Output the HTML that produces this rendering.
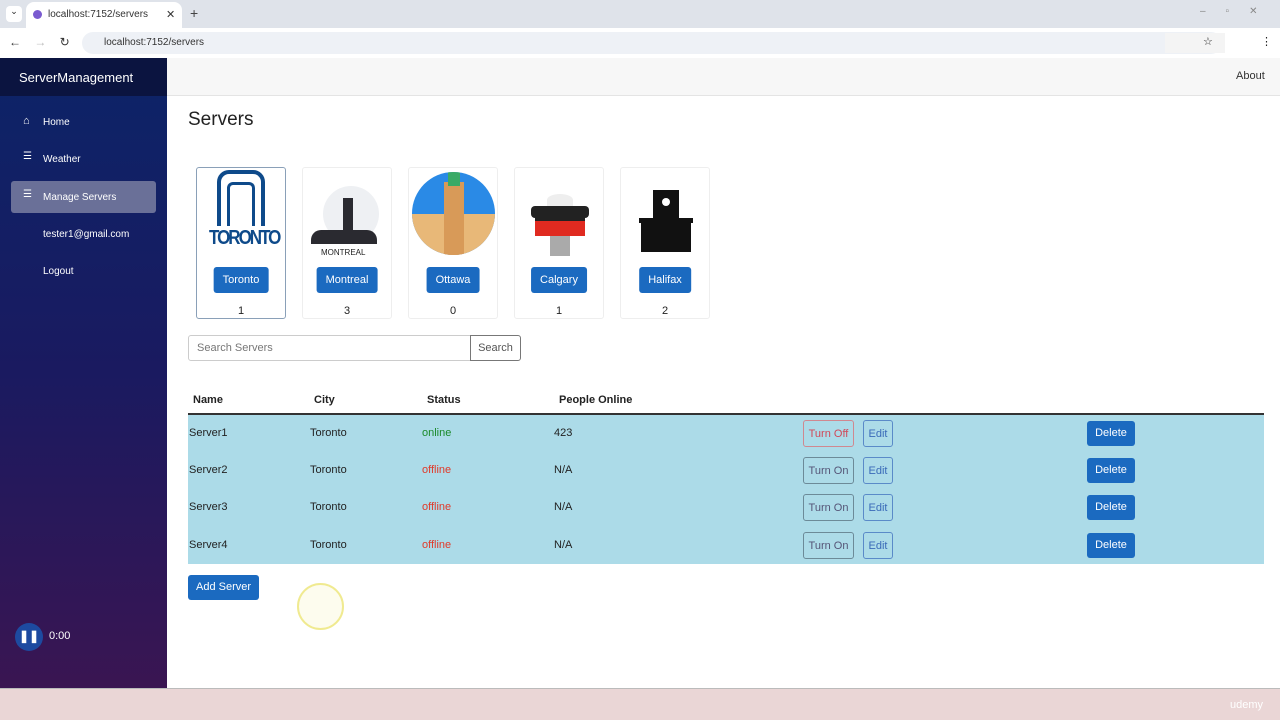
<!DOCTYPE html>
<html><head><meta charset="utf-8"><style>
*{box-sizing:border-box;margin:0;padding:0}
body{width:1280px;height:720px;overflow:hidden;font-family:"Liberation Sans",sans-serif;background:#fff;position:relative;font-size:12px;color:#222}
.a{position:absolute}
.tabbar{left:0;top:0;width:1280px;height:28px;background:#dfe3ea}
.tab{left:26px;top:2px;width:156px;height:26px;background:#fff;border-radius:8px 8px 0 0;font-size:10px;padding:7px 0 0 22px;color:#333}
.addr{left:0;top:28px;width:1280px;height:30px;background:#fff}
.url{left:82px;top:32px;width:1140px;height:22px;background:#eef1f6;border-radius:11px;font-size:10px;padding:5px 0 0 22px;color:#333}
.side{left:0;top:58px;width:167px;height:630px;background:linear-gradient(#0c2468 0%,#1a1a60 50%,#3a1552 100%)}
.brand{left:0;top:58px;width:167px;height:38px;background:#0b1440;color:#fff;font-size:13px;padding:12px 0 0 19px}
.nav{left:11px;width:145px;height:32px;color:#fff;font-size:10px;padding:11px 0 0 32px;border-radius:3px}
.top{left:167px;top:58px;width:1113px;height:38px;background:#f7f7f7;border-bottom:1px solid #e4e4e4}
.card{top:167px;width:90px;height:152px;border:1px solid #eee;border-radius:3px;text-align:center;font-size:11px}
.card .b{position:absolute;top:99px;left:50%;transform:translateX(-50%);background:#1b6ac0;color:#fff;padding:7px 9px;border-radius:3px;font-size:11px}
.card .n{position:absolute;top:137px;width:100%;left:0}
.btn{background:#1b6ac0;color:#fff;border-radius:3px;font-size:11px;text-align:center}
.row{left:188px;width:1076px;height:37px;background:#acdbe8}
.ob{border:1px solid #6c8a98;border-radius:3px;font-size:11px;text-align:center;color:#557;height:27px;padding-top:7px}
</style></head><body>
<div class="a tabbar"></div>
<div class="a" style="left:6px;top:6px;width:16px;height:16px;background:#fff;border-radius:4px;font-size:9px;text-align:center">⌄</div>
<div class="a tab"><span class="a" style="left:7px;top:8px;width:9px;height:9px;border-radius:50%;background:#7a5bd0"></span>localhost:7152/servers<span class="a" style="left:140px;top:6px;font-size:11px">✕</span></div>
<div class="a" style="left:190px;top:5px;font-size:14px;color:#444">+</div>
<div class="a" style="left:1200px;top:6px;font-size:10px;color:#888;letter-spacing:20px">–▫✕</div>
<div class="a addr"></div>
<div class="a" style="left:9px;top:35px;font-size:12px;color:#333">←&nbsp;&nbsp;&nbsp;&nbsp;<span style="color:#bbb">→</span>&nbsp;&nbsp;&nbsp;&nbsp;↻</div>
<div class="a url">localhost:7152/servers</div>
<div class="a" style="left:1165px;top:33px;width:60px;height:20px;background:#f4f4f4"></div>
<div class="a" style="left:1203px;top:35px;font-size:11px">☆</div>
<div class="a" style="left:1261px;top:35px;font-size:11px">⋮</div>

<div class="a side"></div>
<div class="a brand">ServerManagement</div>
<div class="a nav" style="top:106px"><span class="a" style="left:12px;top:9px;font-size:11px">⌂</span>Home</div>
<div class="a nav" style="top:143px"><span class="a" style="left:12px;top:8px">☰</span>Weather</div>
<div class="a nav" style="top:181px;background:#6a7098"><span class="a" style="left:12px;top:8px">☰</span>Manage Servers</div>
<div class="a nav" style="top:218px">tester1@gmail.com</div>
<div class="a nav" style="top:255px">Logout</div>
<div class="a" style="left:15px;top:623px;width:28px;height:28px;border-radius:50%;background:#1d4aa0;color:#fff;font-size:12px;text-align:center;padding-top:6px;font-weight:bold">❚❚</div>
<div class="a" style="left:49px;top:630px;color:#fff;font-size:11px">0:00</div>

<div class="a top"></div>
<div class="a" style="left:1236px;top:70px;font-size:11px;color:#333">About</div>
<div class="a" style="left:188px;top:109px;font-size:19px;color:#222">Servers</div>

<div class="a card" style="left:196px;border-color:#8aa0b8"><div class="a" style="left:12px;top:60px;width:66px;font-size:17px;font-weight:bold;color:#0e4a8a;letter-spacing:-2px;transform:scaleY(1.2)">TORONTO</div><div class="a" style="left:20px;top:2px;width:48px;height:56px;border:4px solid #0e4a8a;border-bottom:none;border-radius:12px 12px 0 0"></div><div class="a" style="left:30px;top:14px;width:28px;height:44px;border:3px solid #0e4a8a;border-bottom:none;border-radius:6px 6px 0 0"></div><div class="b">Toronto</div><div class="n">1</div></div>
<div class="a card" style="left:302px"><div class="a" style="left:20px;top:18px;width:56px;height:56px;border-radius:50%;background:#eef0f3"></div><div class="a" style="left:40px;top:30px;width:10px;height:46px;background:#2a2a30"></div><div class="a" style="left:8px;top:62px;width:66px;height:14px;background:#2a2a30;border-radius:10px 10px 0 0"></div><div class="a" style="left:18px;top:80px;font-size:8px">MONTREAL</div><div class="b">Montreal</div><div class="n">3</div></div>
<div class="a card" style="left:408px"><div class="a" style="left:3px;top:4px;width:83px;height:83px;border-radius:50%;background:#2a8ae6;overflow:hidden"><div class="a" style="left:0;top:42px;width:83px;height:41px;background:#e8b878"></div><div class="a" style="left:32px;top:10px;width:20px;height:75px;background:#d89a58"></div><div class="a" style="left:36px;top:0;width:12px;height:14px;background:#3aaa66"></div></div><div class="b">Ottawa</div><div class="n">0</div></div>
<div class="a card" style="left:514px"><div class="a" style="left:16px;top:38px;width:58px;height:12px;background:#222;border-radius:4px"></div><div class="a" style="left:20px;top:50px;width:50px;height:18px;background:#e02a20;border-top:3px solid #222"></div><div class="a" style="left:35px;top:68px;width:20px;height:20px;background:#aaa"></div><div class="a" style="left:32px;top:26px;width:26px;height:12px;background:#eee;border-radius:50% 50% 0 0"></div><div class="b">Calgary</div><div class="n">1</div></div>
<div class="a card" style="left:620px"><div class="a" style="left:20px;top:54px;width:50px;height:30px;background:#111"></div><div class="a" style="left:32px;top:22px;width:26px;height:34px;background:#111"></div><div class="a" style="left:18px;top:50px;width:54px;height:5px;background:#111"></div><div class="a" style="left:41px;top:30px;width:8px;height:8px;border-radius:50%;background:#fff"></div><div class="b">Halifax</div><div class="n">2</div></div>

<div class="a" style="left:188px;top:335px;width:283px;height:26px;border:1px solid #ccc;border-radius:3px 0 0 3px;font-size:11px;color:#777;padding:6px 0 0 8px">Search Servers</div>
<div class="a" style="left:470px;top:335px;width:51px;height:26px;border:1px solid #777;border-radius:0 3px 3px 0;font-size:11px;color:#555;text-align:center;padding-top:6px">Search</div>

<div class="a" style="left:193px;top:394px;font-weight:bold;font-size:11px">Name</div>
<div class="a" style="left:314px;top:394px;font-weight:bold;font-size:11px">City</div>
<div class="a" style="left:427px;top:394px;font-weight:bold;font-size:11px">Status</div>
<div class="a" style="left:559px;top:394px;font-weight:bold;font-size:11px">People Online</div>
<div class="a" style="left:188px;top:413px;width:1076px;height:2px;background:#333"></div>
<div class="a row" style="top:415px;height:149px"></div>

<div class="a" style="left:189px;top:427px;font-size:11px">Server1</div><div class="a" style="left:310px;top:427px;font-size:11px">Toronto</div><div class="a" style="left:422px;top:427px;font-size:11px;color:#1a8a2a">online</div><div class="a" style="left:554px;top:427px;font-size:11px">423</div>
<div class="a ob" style="left:803px;top:420px;width:51px;border-color:#d08890;color:#d04858">Turn Off</div>
<div class="a" style="left:189px;top:464px;font-size:11px">Server2</div><div class="a" style="left:310px;top:464px;font-size:11px">Toronto</div><div class="a" style="left:422px;top:464px;font-size:11px;color:#e03a2a">offline</div><div class="a" style="left:554px;top:464px;font-size:11px">N/A</div>
<div class="a ob" style="left:803px;top:457px;width:51px">Turn On</div>
<div class="a" style="left:189px;top:501px;font-size:11px">Server3</div><div class="a" style="left:310px;top:501px;font-size:11px">Toronto</div><div class="a" style="left:422px;top:501px;font-size:11px;color:#e03a2a">offline</div><div class="a" style="left:554px;top:501px;font-size:11px">N/A</div>
<div class="a ob" style="left:803px;top:494px;width:51px">Turn On</div>
<div class="a" style="left:189px;top:539px;font-size:11px">Server4</div><div class="a" style="left:310px;top:539px;font-size:11px">Toronto</div><div class="a" style="left:422px;top:539px;font-size:11px;color:#e03a2a">offline</div><div class="a" style="left:554px;top:539px;font-size:11px">N/A</div>
<div class="a ob" style="left:803px;top:532px;width:51px">Turn On</div>

<div class="a ob" style="left:863px;top:420px;width:30px;border-color:#5a8ac8;color:#3a6ab8">Edit</div>
<div class="a ob" style="left:863px;top:457px;width:30px;border-color:#5a8ac8;color:#3a6ab8">Edit</div>
<div class="a ob" style="left:863px;top:494px;width:30px;border-color:#5a8ac8;color:#3a6ab8">Edit</div>
<div class="a ob" style="left:863px;top:532px;width:30px;border-color:#5a8ac8;color:#3a6ab8">Edit</div>
<div class="a btn" style="left:1087px;top:421px;width:48px;height:25px;padding-top:6px">Delete</div>
<div class="a btn" style="left:1087px;top:458px;width:48px;height:25px;padding-top:6px">Delete</div>
<div class="a btn" style="left:1087px;top:495px;width:48px;height:25px;padding-top:6px">Delete</div>
<div class="a btn" style="left:1087px;top:533px;width:48px;height:25px;padding-top:6px">Delete</div>

<div class="a btn" style="left:188px;top:575px;width:71px;height:25px;padding-top:6px">Add Server</div>
<div class="a" style="left:297px;top:583px;width:47px;height:47px;border-radius:50%;border:2px solid #f0ea90;background:rgba(250,245,200,.3)"></div>

<div class="a" style="left:0;top:688px;width:1280px;height:32px;background:#ead6d6;border-top:1px solid #bbb"></div>
<div class="a" style="left:1230px;top:699px;font-size:11px;color:#fff">udemy</div>
</body></html>
